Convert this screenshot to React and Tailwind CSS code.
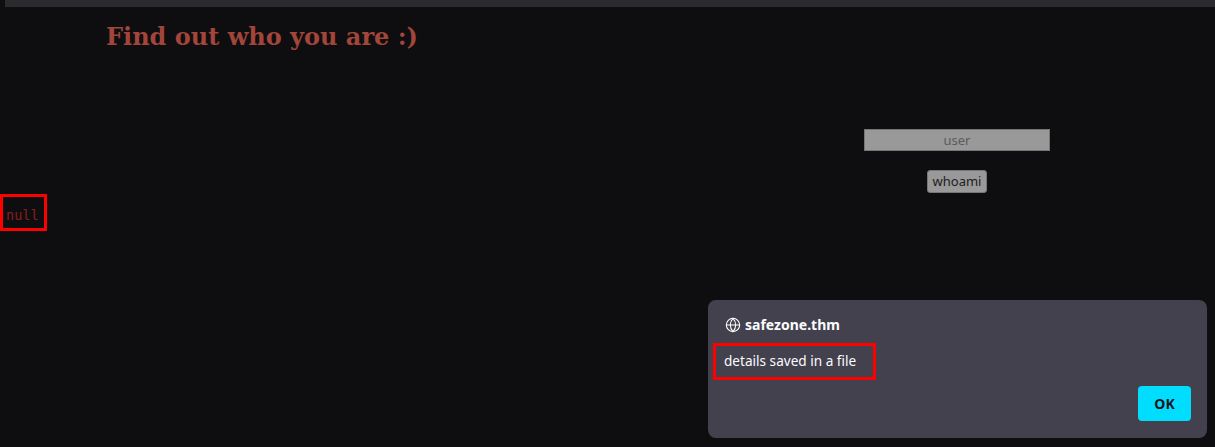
import React from 'react';
import { Globe } from 'lucide-react';

const App = () => {
    return (
        <div className="relative w-[1215px] h-[447px] bg-[#0e0e10] overflow-hidden">
            {/* top strip */}
            <div className="ml-[5px] h-[7px] bg-[#2b2a2e]"></div>

            <h1 className="ml-[106px] mt-[15px] text-[24px] leading-[30px] font-bold text-[#a2453a] font-['DejaVu_Serif',serif]">
                Find out who you are :)
            </h1>

            <div className="flex">
                <div className="w-[699px]"></div>
                {/* form */}
                <div className="flex flex-col items-center w-[516px] pt-[77px]">
                    <input
                        placeholder="user"
                        className="w-[186px] h-[22px] bg-[#999999] border border-[#767676] text-center text-[13px] text-[#5c5c5c] placeholder-[#5c5c5c] font-['Noto_Sans',sans-serif] outline-none"
                    />
                    <button className="mt-[19px] h-[23px] px-[5px] bg-[#999999] border border-[#767676] rounded-[3px] text-[13px] text-[#1c1c1c] font-['Noto_Sans',sans-serif] leading-none">
                        whoami
                    </button>
                </div>
            </div>

            {/* null output */}
            <div className="absolute left-0 top-[194px] w-[47px] h-[37px] border-[3px] border-[#ff0000] flex items-center pl-[3px] pt-[5px]">
                <span className="text-[13.5px] text-[#8b1c1c] font-['DejaVu_Sans_Mono',monospace]">null</span>
            </div>

            {/* alert dialog */}
            <div className="absolute left-[708px] top-[300px] w-[499px] h-[138px] bg-[#42414d] rounded-[8px] font-['Noto_Sans',sans-serif]">
                <div className="flex items-center gap-[4px] pl-[17px] pt-[16px]">
                    <Globe size={16} strokeWidth={1.6} className="text-white" />
                    <span className="text-[14px] font-bold text-[#fbfbfe] leading-[18px]">safezone.thm</span>
                </div>
                <div className="ml-[5px] mt-[9px] w-[163px] h-[37px] border-[3px] border-[#ff0000] flex items-center pl-[8px]">
                    <span className="text-[13.6px] text-[#fbfbfe]">details saved in a file</span>
                </div>
                <div className="flex justify-end pr-[16px] mt-[6px]">
                    <button className="w-[53px] h-[35px] bg-[#00ddff] rounded-[4px] text-[14px] font-bold text-[#15141a]">
                        OK
                    </button>
                </div>
            </div>
        </div>
    );
};

export default App;
